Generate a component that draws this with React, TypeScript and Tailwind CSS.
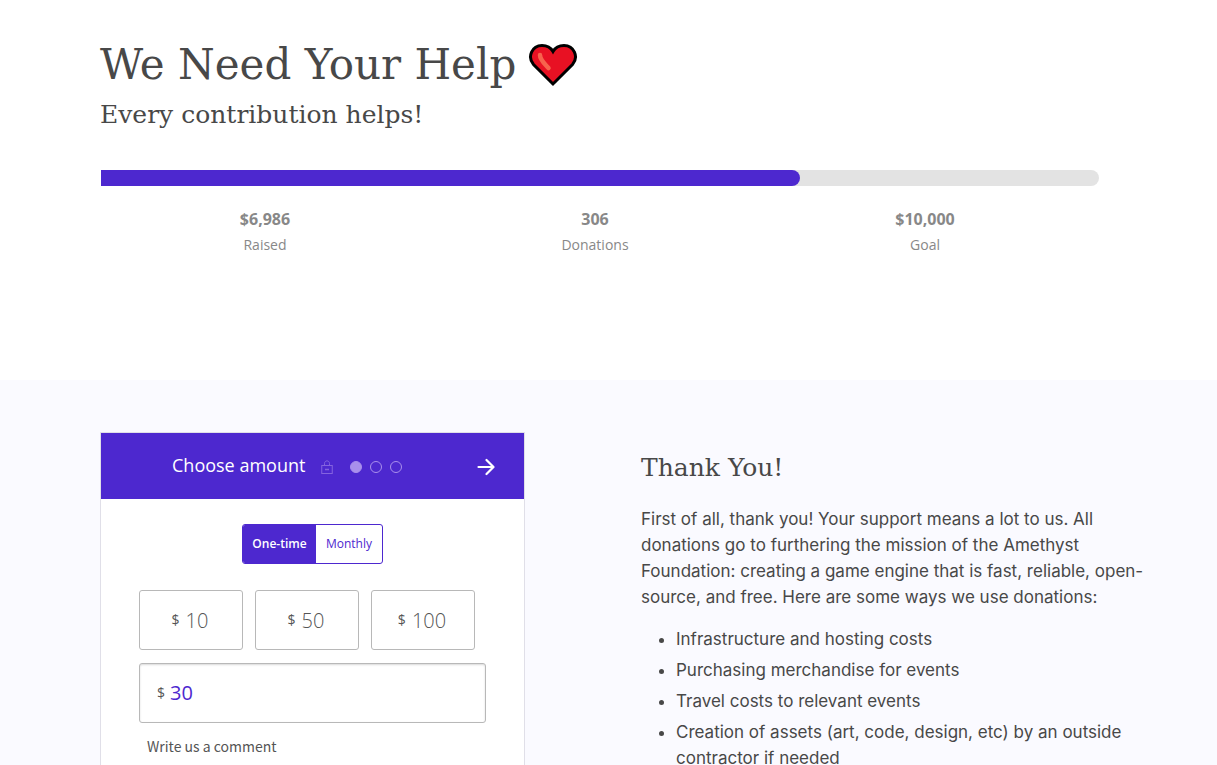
import React, { useState } from 'react';

const stats = [
  { value: '$6,986', label: 'Raised' },
  { value: '306', label: 'Donations' },
  { value: '$10,000', label: 'Goal' },
];

const percentRaised = 70;

const amounts = [10, 50, 100];

const uses = [
  'Infrastructure and hosting costs',
  'Purchasing merchandise for events',
  'Travel costs to relevant events',
  'Creation of assets (art, code, design, etc) by an outside contractor if needed',
];

const HeartIcon: React.FC = () => (
  <svg viewBox="0 0 50 44" className="w-[50px] h-[44px] shrink-0" aria-hidden="true">
    <path
      d="M25 41 L5.5 21.5 C-1 14 4 2.5 14 2.5 C19 2.5 23 5 25 8.5 C27 5 31 2.5 36 2.5 C46 2.5 51 14 44.5 21.5 Z"
      fill="#e81123"
      stroke="#000"
      strokeWidth="3"
    />
    <path d="M12 12 C12 17 16.5 20.5 20.5 25" fill="none" stroke="#f7634d" strokeWidth="4.5" strokeLinecap="round" />
  </svg>
);

const LockIcon: React.FC = () => (
  <svg viewBox="0 0 12 14" className="w-3 h-3.5" fill="none" stroke="#8463df" aria-hidden="true">
    <rect x="0.75" y="5.5" width="10.5" height="8" />
    <path d="M3.5 5.5 V3.5 C3.5 0 8.5 0 8.5 3.5 V5.5" />
    <path d="M4 9.5 H8" strokeWidth="1.5" />
  </svg>
);

const Progress: React.FC = () => (
  <div className="mt-[37px] mr-[18px]">
    <div className="ml-px h-4 rounded-r-full bg-[#e3e3e3]">
      <div className="h-4 rounded-r-full bg-[#4d28cf]" style={{ width: `${percentRaised}%` }} />
    </div>
    <div className="mr-[9px] mt-5 grid grid-cols-3 text-center font-['Open_Sans',sans-serif] text-[#888]">
      {stats.map((s) => (
        <div key={s.label}>
          <div className="text-base leading-[26px] font-bold">{s.value}</div>
          <div className="text-sm leading-[26px]">{s.label}</div>
        </div>
      ))}
    </div>
  </div>
);

const DonationForm: React.FC = () => {
  const [monthly, setMonthly] = useState(false);
  const [amount, setAmount] = useState('30');

  return (
    <form className="border border-[#e0dfe8] bg-white pb-16 font-['Open_Sans',sans-serif]" onSubmit={(e) => e.preventDefault()}>
      <div className="flex h-[66px] items-center bg-[#4d28cf] pr-[29px] pl-[71px] text-white">
        <h3 className="pb-0.5 text-lg font-medium">Choose amount</h3>
        <div className="ml-4 flex items-center pt-0.5">
          <LockIcon />
          <div className="ml-[17px] flex gap-2">
            <span className="size-3 rounded-full border border-[#a98fec] bg-[#a98fec]" />
            <span className="size-3 rounded-full border border-[#a98fec]" />
            <span className="size-3 rounded-full border border-[#a98fec]" />
          </div>
        </div>
        <button type="button" aria-label="Next" className="ml-auto pt-0.5">
          <svg viewBox="0 0 18 18" className="size-[18px]" fill="none" stroke="currentColor" strokeWidth="2.2" strokeLinecap="round" strokeLinejoin="round">
            <path d="M1.5 9 H16 M9.5 2 L16.5 9 L9.5 16" />
          </svg>
        </button>
      </div>

      <div className="px-[38px] pt-[25px]">
        <div className="mx-auto flex h-10 w-[141px] overflow-hidden rounded-[3px] border border-[#4d28cf] text-xs">
          <button
            type="button"
            onClick={() => setMonthly(false)}
            className={`w-[73px] ${monthly ? 'text-[#4d28cf]' : 'bg-[#4d28cf] font-semibold text-white'}`}
          >
            One-time
          </button>
          <button
            type="button"
            onClick={() => setMonthly(true)}
            className={`flex-1 ${monthly ? 'bg-[#4d28cf] font-semibold text-white' : 'text-[#4d28cf]'}`}
          >
            Monthly
          </button>
        </div>

        <div className="mt-[26px] mr-[11px] grid grid-cols-3 gap-3">
          {amounts.map((a) => (
            <button
              key={a}
              type="button"
              onClick={() => setAmount(String(a))}
              className="flex h-[60px] items-center justify-center gap-1.5 rounded-[3px] border border-[#b8b8b8] pr-0.5 text-[#555]"
            >
              <span className="text-sm">$</span>
              <span className="pt-0.5 text-xl font-light">{a}</span>
            </button>
          ))}
        </div>

        <label className="mt-[13px] flex h-[60px] items-center gap-[5px] rounded-[3px] border border-[#b8b8b8] px-[17px] text-[#555] shadow-[inset_0_1px_2px_rgba(0,0,0,0.15)]">
          <span className="text-sm">$</span>
          <input
            aria-label="Amount"
            value={amount}
            onChange={(e) => setAmount(e.target.value)}
            className="min-w-0 flex-1 bg-transparent text-xl text-[#4d28cf] outline-none"
          />
        </label>

        <button type="button" className="mt-[13px] ml-2 block text-sm text-[#555] font-['Noto_Sans_CJK_SC',sans-serif]">
          Write us a comment
        </button>
      </div>
    </form>
  );
};

const App: React.FC = () => {
  return (
    <div className="min-h-screen bg-white text-[#484848]">
      <header className="px-[100px] pt-[37px] pb-[122px] font-['DejaVu_Serif',serif]">
        <h1 className="flex items-center gap-3 text-[42px] leading-[56px]">
          We Need Your Help
          <HeartIcon />
        </h1>
        <h2 className="mt-1 text-[25px] leading-9">Every contribution helps!</h2>
        <Progress />
      </header>

      <section className="grid grid-cols-[425fr_504fr] gap-x-[116px] bg-[#fafaff] pt-[52px] pr-[72px] pb-16 pl-[100px]">
        <DonationForm />
        <div>
          <h2 className="mt-[18px] font-['DejaVu_Serif',serif] text-[25px] leading-9">Thank You!</h2>
          <div className="mt-5 font-['Inter',sans-serif] text-[17px] leading-[26px]">
            <p>
              First of all, thank you! Your support means a lot to us. All donations go to furthering the mission of the Amethyst
              Foundation: creating a game engine that is fast, reliable, open-source, and free. Here are some ways we use donations:
            </p>
            <ul className="mt-4 list-disc space-y-[5px] pl-[35px]">
              {uses.map((u) => (
                <li key={u}>{u}</li>
              ))}
            </ul>
          </div>
        </div>
      </section>
    </div>
  );
};

export default App;
